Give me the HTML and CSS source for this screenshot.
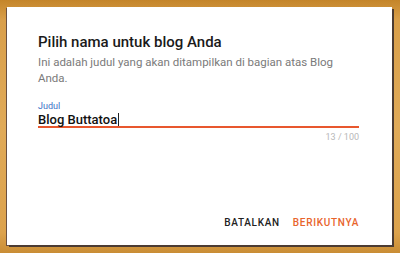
FILE: index.html
```html
<!DOCTYPE html>
<html lang="id">
<head>
<meta charset="utf-8">
<link rel="stylesheet" href="styles.css">
</head>
<body>
<div class="frame">
  <div class="dialog">
    <h1 class="title">Pilih nama untuk blog Anda</h1>
    <p class="desc">Ini adalah judul yang akan ditampilkan di bagian atas Blog Anda.</p>
    <div class="field">
      <div class="label">Judul</div>
      <div class="input">Blog Buttatoa<span class="caret"></span></div>
      <div class="counter">13 / 100</div>
    </div>
    <div class="actions">
      <span class="btn cancel">BATALKAN</span>
      <span class="btn next">BERIKUTNYA</span>
    </div>
  </div>
</div>
</body>
</html>
```
FILE: styles.css
```css
html, body {
  margin: 0;
  padding: 0;
}
body {
  width: 400px;
  height: 253px;
  overflow: hidden;
  font-family: Roboto, "Liberation Sans", sans-serif;
}
.frame {
  width: 400px;
  height: 253px;
  box-sizing: border-box;
  padding: 7px 6px 6px 7px;
  background: linear-gradient(180deg, #c4852a 0%, #d99f4a 8%, #e0aa58 50%, #dca24c 92%, #c98d35 100%);
}
.dialog {
  height: 238px;
  width: 385px;
  box-sizing: border-box;
  background: #ffffff;
  box-shadow: 2px 2px 0 #4b3b33, -1px 1px 0 #6b5040;
  padding: 25px 33px 16px 31px;
  display: flex;
  flex-direction: column;
}
.title {
  margin: 0;
  font-size: 15px;
  line-height: 20px;
  font-weight: 500;
  color: #1a1a1a;
}
.desc {
  margin: 3px 0 0;
  font-size: 11.5px;
  line-height: 15.5px;
  color: #7a7a7a;
  padding-right: 20px;
}
.field {
  margin-top: 14px;
  display: flex;
  flex-direction: column;
}
.label {
  font-size: 9px;
  line-height: 12px;
  color: #3b6fc6;
}
.input {
  font-size: 13px;
  line-height: 13px;
  font-weight: 500;
  color: #111;
  padding-top: 1px;
  border-bottom: 2px solid #e8572e;
  display: flex;
  align-items: center;
}
.caret {
  display: inline-block;
  width: 1px;
  height: 13px;
  background: #222;
  margin-left: 1px;
}
.counter {
  align-self: flex-end;
  font-size: 9px;
  line-height: 12px;
  color: #b8b8b8;
  margin-top: 3px;
}
.actions {
  margin-top: auto;
  display: flex;
  justify-content: flex-end;
  gap: 13px;
}
.btn {
  font-size: 10px;
  line-height: 12px;
  font-weight: 500;
  letter-spacing: 0.7px;
}
.cancel {
  color: #222;
}
.next {
  color: #e8642c;
}
```
